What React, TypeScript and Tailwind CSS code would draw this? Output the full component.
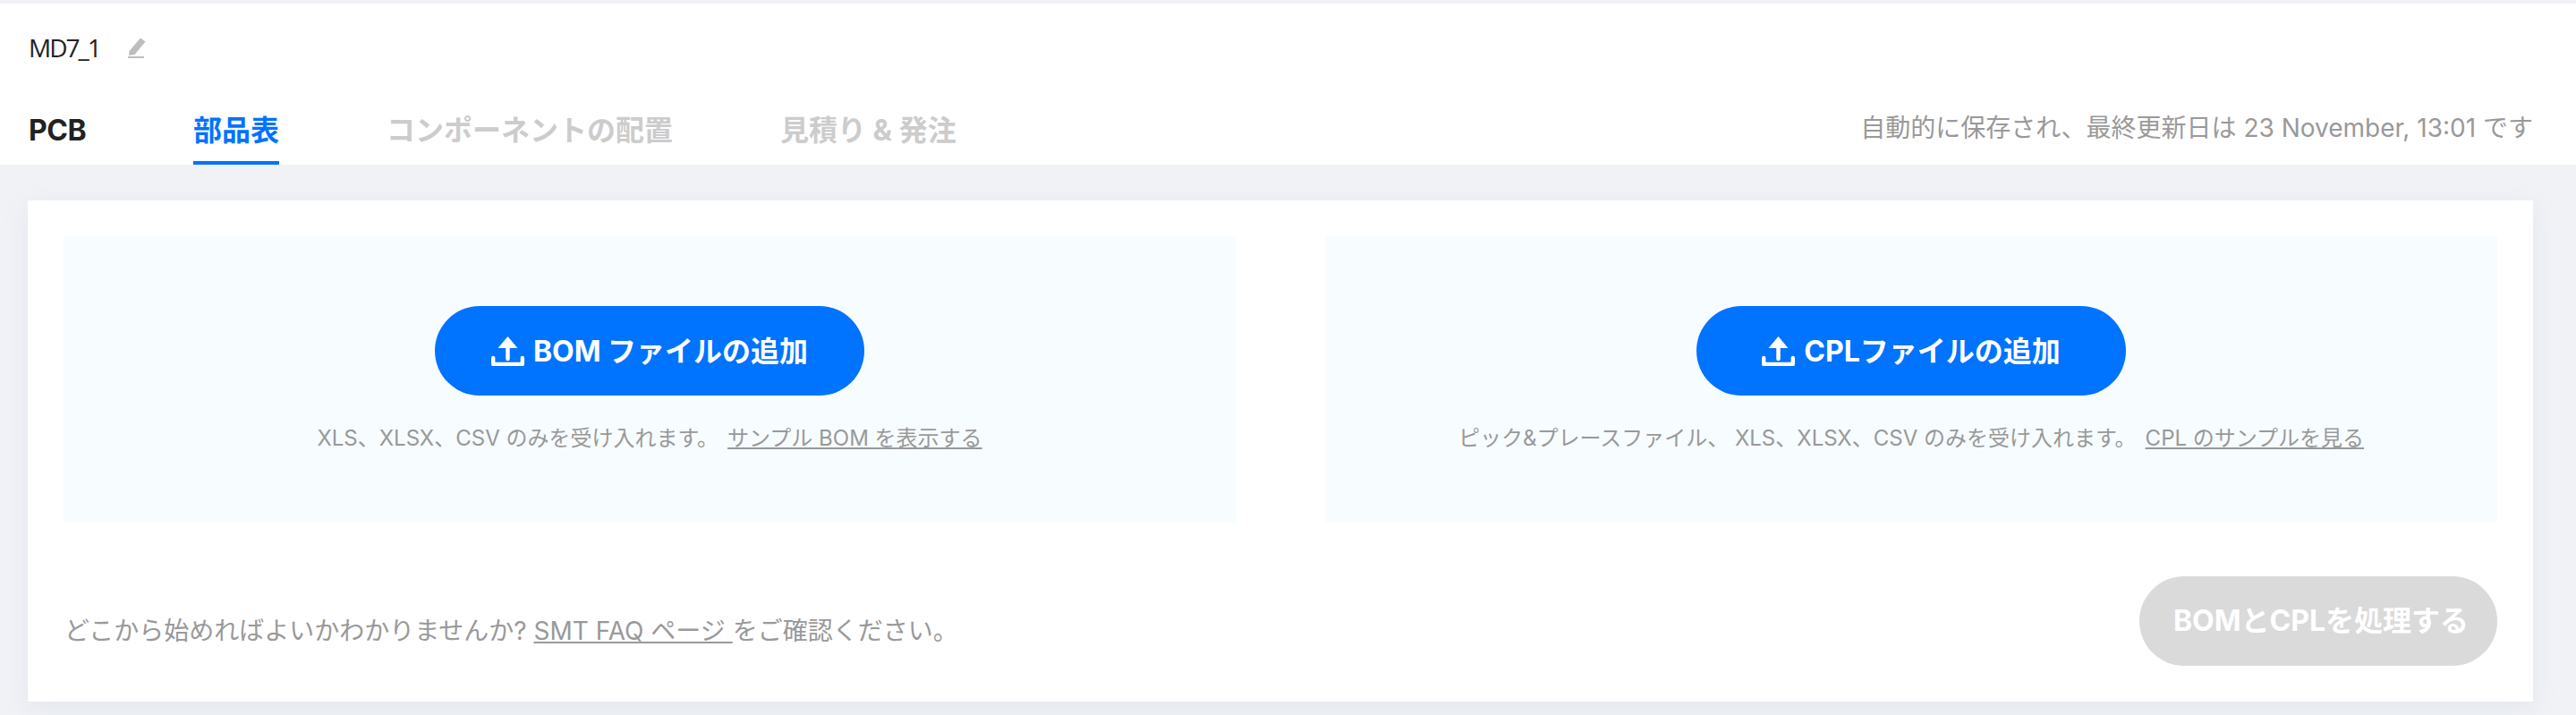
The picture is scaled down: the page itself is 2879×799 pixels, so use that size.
// Smart assembly order page: upload step
const fontStack = "font-['Inter','Noto_Sans_CJK_JP',sans-serif]";

function UploadIcon() {
  return (
    <svg width="37" height="33" viewBox="0 0 37 33" fill="none" className="shrink-0">
      <path d="M18.5 0 L29.5 13 H7.5 Z" fill="#fff" />
      <path d="M18.5 10 V25" stroke="#fff" strokeWidth="4.5" strokeLinecap="round" />
      <path d="M2.2 24 V31 H34.8 V24" stroke="#fff" strokeWidth="4.4" strokeLinejoin="round" strokeLinecap="round" />
    </svg>
  );
}

function PencilIcon() {
  return (
    <svg width="20" height="23" viewBox="0 0 20 23" className="shrink-0">
      <path d="M14 0.5 L19.5 4.5 L7.5 19 L1 20 L1.5 15 Z" fill="#bdbdbd" />
      <rect x="0" y="21" width="18" height="2" fill="#bdbdbd" />
    </svg>
  );
}

interface UploadPanelProps {
  label: string;
  note: string;
  linkText: string;
}

function UploadPanel({ label, note, linkText }: UploadPanelProps) {
  return (
    <div className="flex h-[320px] flex-col items-center bg-[#f7fcff] pt-[78px]">
      <button className="flex h-[100px] w-[480px] items-center justify-center gap-[10px] rounded-full bg-[#0073ff] text-[32px] font-bold text-white">
        <UploadIcon />
        <span className="pt-[2px]">{label}</span>
      </button>
      <p className="mt-[30px] text-[24px] leading-[36px] text-[#999]">
        {note}
        <a className="ml-[10px] underline">{linkText}</a>
      </p>
    </div>
  );
}

export default function App() {
  return (
    <div className={`min-h-[799px] bg-[#f0f2f6] pt-1 ${fontStack}`}>
      {/* Title and tabs */}
      <div className="h-[180px] bg-white pl-8 pr-12">
        <div className="flex items-center gap-[31px] pt-[31px]">
          <span className="text-[28px] leading-[36px] text-[#222] font-['Open_Sans',sans-serif] tracking-[-2px]">MD7_1</span>
          <PencilIcon />
        </div>
        <div className="mt-[51px] flex items-start justify-between">
          <div className="flex gap-[120px] text-[32px] font-bold leading-[48px]">
            <span className="w-[64px] tracking-[-0.5px] text-[#222]">PCB</span>
            <span className="relative text-[#0073ff]">
              部品表
              <span className="absolute left-0 right-0 top-[58px] h-1 bg-[#0073ff]" />
            </span>
            <span className="text-[#ccc]">コンポーネントの配置</span>
            <span className="text-[#ccc]">見積り & 発注</span>
          </div>
          <span className="pt-[1px] text-[28px] leading-[40px] text-[#999]">
            自動的に保存され、最終更新日は 23 November, 13:01 です
          </span>
        </div>
      </div>

      {/* Upload card */}
      <div className="ml-[31px] mr-12 mt-10 h-[560px] bg-white px-10 pt-10 shadow-[0_8px_24px_rgba(200,205,220,0.3)]">
        <div className="grid grid-cols-2 gap-[100px]">
          <UploadPanel
            label="BOM ファイルの追加"
            note="XLS、XLSX、CSV のみを受け入れます。"
            linkText="サンプル BOM を表示する"
          />
          <UploadPanel
            label="CPLファイルの追加"
            note="ピック&プレースファイル、 XLS、XLSX、CSV のみを受け入れます。"
            linkText="CPL のサンプルを見る"
          />
        </div>
        <div className="mt-[60px] flex items-center justify-between">
          <p className="pl-[1px] pt-[22px] text-[28px] leading-[40px] text-[#999]">
            どこから始めればよいかわかりませんか? <a className="underline">SMT FAQ ページ </a>をご確認ください。
          </p>
          <button className="h-[100px] w-[400px] rounded-full bg-[#dadada] pl-[6px] text-[32px] font-bold text-white">
            BOMとCPLを処理する
          </button>
        </div>
      </div>
    </div>
  );
}
